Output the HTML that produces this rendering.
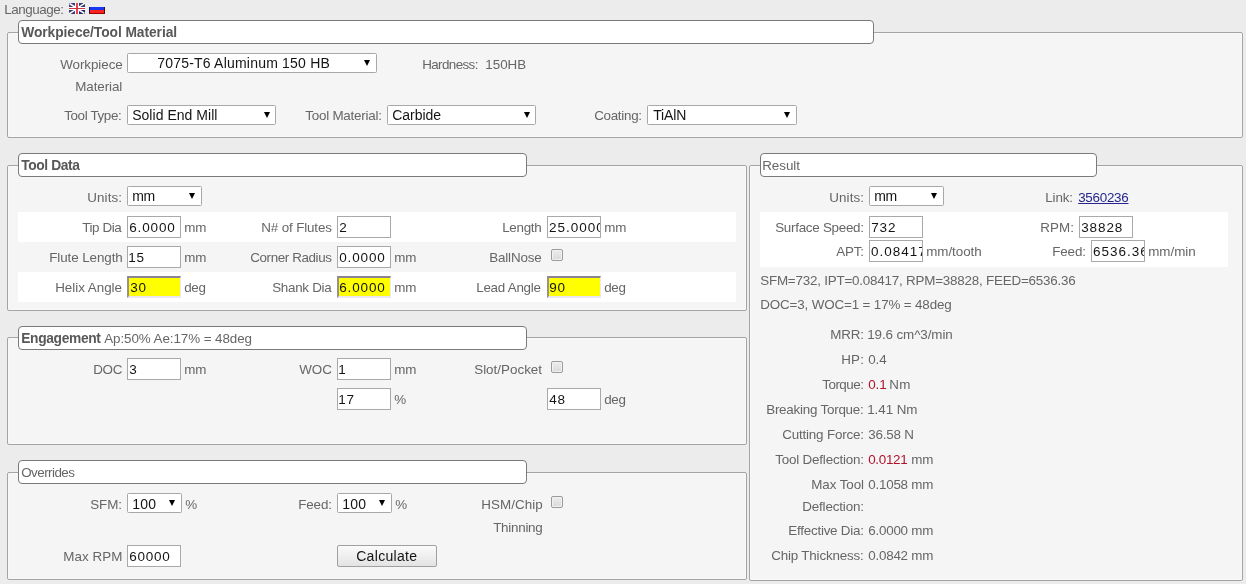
<!DOCTYPE html>
<html><head><meta charset="utf-8"><style>
html,body{margin:0;padding:0;}
body{width:1246px;height:584px;overflow:hidden;background:#ececec;position:relative;font-family:"Liberation Sans",sans-serif;}
#w{position:absolute;left:0;top:0;width:1246px;height:584px;will-change:transform;}
.x{position:absolute;line-height:16px;white-space:pre;}
.n{position:absolute;font-size:13.5px;line-height:16px;white-space:pre;color:#141414;}
</style></head><body><div id="w">
<svg style="position:absolute;left:69px;top:3px" width="16" height="11" viewBox="0 0 16 11">
<rect width="16" height="11" fill="#fff"/>
<rect x="0" y="0" width="6" height="4" fill="#3c3c78"/><rect x="10" y="0" width="6" height="4" fill="#2c3c6c"/>
<rect x="0" y="7" width="6" height="4" fill="#3c3c78"/><rect x="10" y="7" width="6" height="4" fill="#28286a"/>
<path d="M0.5,0.5 L6,4 M16,0 L10,4 M0,11 L6,7 M10,7 L15.5,10.5" stroke="#fff" stroke-width="1.5"/>
<rect x="7" y="0" width="2" height="11" fill="#e84050"/><rect x="0" y="5" width="16" height="1" fill="#d03040"/>
</svg>
<svg style="position:absolute;left:89px;top:6px" width="16" height="8" viewBox="0 0 16 8">
<rect width="16" height="8" fill="#c00"/>
<rect x="0" y="0" width="16" height="1" fill="#e8e8ff"/>
<rect x="0" y="1" width="16" height="3" fill="#1838f0"/>
<rect x="0" y="4" width="16" height="3" fill="#ff2020"/>
<rect x="0" y="1" width="1" height="7" fill="#101070"/><rect x="15" y="1" width="1" height="7" fill="#500"/>
<rect x="0" y="7" width="16" height="1" fill="#900"/>
</svg>
<div style="position:absolute;left:7px;top:32px;width:1236px;height:106px;box-sizing:border-box;border:1px solid #a4a4a4;border-radius:2px;background:#f5f5f5;box-shadow:inset 0 0 0 1px #f9f9f9"></div>
<div style="position:absolute;left:18px;top:20px;width:856px;height:24px;box-sizing:border-box;border:1px solid #7a7a7a;border-radius:4px;background:#fff"></div>
<div style="position:absolute;left:127px;top:53px;width:250px;height:20px;box-sizing:border-box;border:1px solid #a8a8a8;border-radius:1.5px;background:#fff"></div>
<svg style="position:absolute;left:364px;top:60px" width="6" height="6"><polygon points="0,0 6,0 3,6" fill="#000"/></svg>
<div style="position:absolute;left:127px;top:105px;width:149px;height:20px;box-sizing:border-box;border:1px solid #a8a8a8;border-radius:1.5px;background:#fff"></div>
<svg style="position:absolute;left:264px;top:112px" width="6" height="6"><polygon points="0,0 6,0 3,6" fill="#000"/></svg>
<div style="position:absolute;left:387px;top:105px;width:149px;height:20px;box-sizing:border-box;border:1px solid #a8a8a8;border-radius:1.5px;background:#fff"></div>
<svg style="position:absolute;left:524px;top:112px" width="6" height="6"><polygon points="0,0 6,0 3,6" fill="#000"/></svg>
<div style="position:absolute;left:647px;top:105px;width:150px;height:20px;box-sizing:border-box;border:1px solid #a8a8a8;border-radius:1.5px;background:#fff"></div>
<svg style="position:absolute;left:784px;top:112px" width="6" height="6"><polygon points="0,0 6,0 3,6" fill="#000"/></svg>
<div style="position:absolute;left:7px;top:165px;width:740px;height:146px;box-sizing:border-box;border:1px solid #a4a4a4;border-radius:2px;background:#f5f5f5;box-shadow:inset 0 0 0 1px #f9f9f9"></div>
<div style="position:absolute;left:18px;top:153px;width:509px;height:24px;box-sizing:border-box;border:1px solid #7a7a7a;border-radius:4px;background:#fff"></div>
<div style="position:absolute;left:127px;top:186px;width:75px;height:20px;box-sizing:border-box;border:1px solid #a8a8a8;border-radius:1.5px;background:#fff"></div>
<svg style="position:absolute;left:189px;top:193px" width="6" height="6"><polygon points="0,0 6,0 3,6" fill="#000"/></svg>
<div style="position:absolute;left:18px;top:212px;width:718px;height:30px;box-sizing:border-box;background:#fff"></div>
<div style="position:absolute;left:18px;top:272px;width:718px;height:30px;box-sizing:border-box;background:#fff"></div>
<div style="position:absolute;left:127px;top:216px;width:54px;height:22px;box-sizing:border-box;background:#fff;border:1px solid #a9a9a9"></div>
<div style="position:absolute;left:337px;top:216px;width:54px;height:22px;box-sizing:border-box;background:#fff;border:1px solid #a9a9a9"></div>
<div style="position:absolute;left:547px;top:216px;width:54px;height:22px;box-sizing:border-box;background:#fff;border:1px solid #a9a9a9"></div>
<div style="position:absolute;left:127px;top:246px;width:54px;height:22px;box-sizing:border-box;background:#fff;border:1px solid #a9a9a9"></div>
<div style="position:absolute;left:337px;top:246px;width:54px;height:22px;box-sizing:border-box;background:#fff;border:1px solid #a9a9a9"></div>
<div style="position:absolute;left:551px;top:249px;width:12px;height:12px;box-sizing:border-box;border:1px solid #9a9a9a;border-radius:2px;background:linear-gradient(#ececec,#dadada);box-shadow:inset 0 0 0 1px #f2f2f2"></div>
<div style="position:absolute;left:127px;top:276px;width:54px;height:22px;box-sizing:border-box;background:#ffff00;border-top:2px solid #8a8490;border-left:2px solid #989098;border-right:1px solid #eeeaf2;border-bottom:2px solid #ebe6f0"></div>
<div style="position:absolute;left:337px;top:276px;width:54px;height:22px;box-sizing:border-box;background:#ffff00;border-top:2px solid #8a8490;border-left:2px solid #989098;border-right:1px solid #eeeaf2;border-bottom:2px solid #ebe6f0"></div>
<div style="position:absolute;left:547px;top:276px;width:54px;height:22px;box-sizing:border-box;background:#ffff00;border-top:2px solid #8a8490;border-left:2px solid #989098;border-right:1px solid #eeeaf2;border-bottom:2px solid #ebe6f0"></div>
<div style="position:absolute;left:549px;top:217px;width:51px;height:20px;overflow:hidden"><div class="n" style="left:0px;top:2.9px;letter-spacing:1px">25.0000</div></div>
<div style="position:absolute;left:7px;top:337px;width:740px;height:108px;box-sizing:border-box;border:1px solid #a4a4a4;border-radius:2px;background:#f5f5f5;box-shadow:inset 0 0 0 1px #f9f9f9"></div>
<div style="position:absolute;left:18px;top:326px;width:509px;height:24px;box-sizing:border-box;border:1px solid #7a7a7a;border-radius:4px;background:#fff"></div>
<div style="position:absolute;left:127px;top:358px;width:54px;height:22px;box-sizing:border-box;background:#fff;border:1px solid #a9a9a9"></div>
<div style="position:absolute;left:337px;top:358px;width:54px;height:22px;box-sizing:border-box;background:#fff;border:1px solid #a9a9a9"></div>
<div style="position:absolute;left:551px;top:361px;width:12px;height:12px;box-sizing:border-box;border:1px solid #9a9a9a;border-radius:2px;background:linear-gradient(#ececec,#dadada);box-shadow:inset 0 0 0 1px #f2f2f2"></div>
<div style="position:absolute;left:337px;top:388px;width:54px;height:22px;box-sizing:border-box;background:#fff;border:1px solid #a9a9a9"></div>
<div style="position:absolute;left:547px;top:388px;width:54px;height:22px;box-sizing:border-box;background:#fff;border:1px solid #a9a9a9"></div>
<div style="position:absolute;left:7px;top:472px;width:740px;height:108px;box-sizing:border-box;border:1px solid #a4a4a4;border-radius:2px;background:#f5f5f5;box-shadow:inset 0 0 0 1px #f9f9f9"></div>
<div style="position:absolute;left:18px;top:460px;width:509px;height:24px;box-sizing:border-box;border:1px solid #7a7a7a;border-radius:4px;background:#fff"></div>
<div style="position:absolute;left:127px;top:493px;width:55px;height:20px;box-sizing:border-box;border:1px solid #a8a8a8;border-radius:1.5px;background:#fff"></div>
<svg style="position:absolute;left:169px;top:500px" width="6" height="6"><polygon points="0,0 6,0 3,6" fill="#000"/></svg>
<div style="position:absolute;left:337px;top:493px;width:55px;height:20px;box-sizing:border-box;border:1px solid #a8a8a8;border-radius:1.5px;background:#fff"></div>
<svg style="position:absolute;left:379px;top:500px" width="6" height="6"><polygon points="0,0 6,0 3,6" fill="#000"/></svg>
<div style="position:absolute;left:551px;top:496px;width:12px;height:12px;box-sizing:border-box;border:1px solid #9a9a9a;border-radius:2px;background:linear-gradient(#ececec,#dadada);box-shadow:inset 0 0 0 1px #f2f2f2"></div>
<div style="position:absolute;left:127px;top:545px;width:54px;height:22px;box-sizing:border-box;background:#fff;border:1px solid #a9a9a9"></div>
<div style="position:absolute;left:337px;top:545px;width:100px;height:22px;box-sizing:border-box;border:1px solid #a0a0a0;border-radius:2px;background:linear-gradient(#fbfbfb,#e3e3e3)"></div>
<div style="position:absolute;left:749px;top:165px;width:494px;height:416px;box-sizing:border-box;border:1px solid #a4a4a4;border-radius:2px;background:#f5f5f5;box-shadow:inset 0 0 0 1px #f9f9f9"></div>
<div style="position:absolute;left:760px;top:153px;width:337px;height:24px;box-sizing:border-box;border:1px solid #7a7a7a;border-radius:4px;background:#fff"></div>
<div style="position:absolute;left:869px;top:186px;width:75px;height:20px;box-sizing:border-box;border:1px solid #a8a8a8;border-radius:1.5px;background:#fff"></div>
<svg style="position:absolute;left:931px;top:193px" width="6" height="6"><polygon points="0,0 6,0 3,6" fill="#000"/></svg>
<div style="position:absolute;left:760px;top:212px;width:468px;height:55px;box-sizing:border-box;background:#fff"></div>
<div style="position:absolute;left:869px;top:216px;width:54px;height:22px;box-sizing:border-box;background:#fff;border:1px solid #a9a9a9"></div>
<div style="position:absolute;left:1079px;top:216px;width:54px;height:22px;box-sizing:border-box;background:#fff;border:1px solid #a9a9a9"></div>
<div style="position:absolute;left:869px;top:240px;width:54px;height:22px;box-sizing:border-box;background:#fff;border:1px solid #a9a9a9"></div>
<div style="position:absolute;left:1091px;top:240px;width:54px;height:22px;box-sizing:border-box;background:#fff;border:1px solid #a9a9a9"></div>
<div style="position:absolute;left:871px;top:241px;width:51px;height:20px;overflow:hidden"><div class="n" style="left:0px;top:2.9px;letter-spacing:1px">0.08417</div></div>
<div style="position:absolute;left:1093px;top:241px;width:51px;height:20px;overflow:hidden"><div class="n" style="left:0px;top:2.9px;letter-spacing:1px">6536.36</div></div>
<div class="x" style="left:4.20px;top:1.96px;font-size:13.4px;font-weight:400;color:#666666;letter-spacing:-0.435px;">Language:</div>
<div class="x" style="left:21.20px;top:25.02px;font-size:13.8px;font-weight:700;color:#585858;letter-spacing:-0.068px;">Workpiece/Tool Material</div>
<div class="x" style="left:60.20px;top:56.96px;font-size:13.4px;font-weight:400;color:#666666;letter-spacing:-0.058px;">Workpiece</div>
<div class="x" style="left:75.20px;top:78.96px;font-size:13.4px;font-weight:400;color:#666666;letter-spacing:-0.079px;">Material</div>
<div class="x" style="left:157.20px;top:55.15px;font-size:14px;font-weight:400;color:#141414;letter-spacing:0.208px;">7075-T6 Aluminum 150 HB</div>
<div class="x" style="left:422.20px;top:56.96px;font-size:13.4px;font-weight:400;color:#666666;letter-spacing:-0.600px;">Hardness:</div>
<div class="x" style="left:485.20px;top:56.96px;font-size:13.4px;font-weight:400;color:#666666;letter-spacing:0.022px;">150HB</div>
<div class="x" style="left:64.20px;top:107.96px;font-size:13.4px;font-weight:400;color:#666666;letter-spacing:-0.357px;">Tool Type:</div>
<div class="x" style="left:132.20px;top:107.15px;font-size:14px;font-weight:400;color:#141414;letter-spacing:0.031px;">Solid End Mill</div>
<div class="x" style="left:305.20px;top:107.96px;font-size:13.4px;font-weight:400;color:#666666;letter-spacing:-0.216px;">Tool Material:</div>
<div class="x" style="left:392.20px;top:107.15px;font-size:14px;font-weight:400;color:#141414;letter-spacing:-0.024px;">Carbide</div>
<div class="x" style="left:594.20px;top:107.96px;font-size:13.4px;font-weight:400;color:#666666;letter-spacing:-0.294px;">Coating:</div>
<div class="x" style="left:653.20px;top:107.15px;font-size:14px;font-weight:400;color:#141414;letter-spacing:-0.123px;">TiAlN</div>
<div class="x" style="left:21.20px;top:158.02px;font-size:13.8px;font-weight:700;color:#585858;letter-spacing:-0.382px;">Tool Data</div>
<div class="x" style="left:87.20px;top:189.96px;font-size:13.4px;font-weight:400;color:#666666;letter-spacing:0.118px;">Units:</div>
<div class="x" style="left:132.20px;top:188.15px;font-size:14px;font-weight:400;color:#141414;letter-spacing:-0.300px;">mm</div>
<div class="x" style="left:82.20px;top:219.96px;font-size:13.4px;font-weight:400;color:#666666;letter-spacing:-0.395px;">Tip Dia</div>
<div class="x" style="left:129.20px;top:220.22px;font-size:13.5px;font-weight:400;color:#141414;letter-spacing:0.863px;">6.0000</div>
<div class="x" style="left:184.20px;top:219.96px;font-size:13.4px;font-weight:400;color:#666666;letter-spacing:-0.054px;">mm</div>
<div class="x" style="left:261.20px;top:219.96px;font-size:13.4px;font-weight:400;color:#666666;letter-spacing:-0.127px;">N# of Flutes</div>
<div class="x" style="left:339.20px;top:220.22px;font-size:13.5px;font-weight:400;color:#141414;letter-spacing:0.900px;">2</div>
<div class="x" style="left:502.20px;top:219.96px;font-size:13.4px;font-weight:400;color:#666666;letter-spacing:-0.282px;">Length</div>
<div class="x" style="left:604.20px;top:219.96px;font-size:13.4px;font-weight:400;color:#666666;letter-spacing:-0.054px;">mm</div>
<div class="x" style="left:49.20px;top:249.96px;font-size:13.4px;font-weight:400;color:#666666;letter-spacing:-0.082px;">Flute Length</div>
<div class="x" style="left:128.20px;top:250.22px;font-size:13.5px;font-weight:400;color:#141414;letter-spacing:0.900px;">15</div>
<div class="x" style="left:184.20px;top:249.96px;font-size:13.4px;font-weight:400;color:#666666;letter-spacing:-0.054px;">mm</div>
<div class="x" style="left:250.20px;top:249.96px;font-size:13.4px;font-weight:400;color:#666666;letter-spacing:-0.378px;">Corner Radius</div>
<div class="x" style="left:339.20px;top:250.22px;font-size:13.5px;font-weight:400;color:#141414;letter-spacing:0.863px;">0.0000</div>
<div class="x" style="left:394.20px;top:249.96px;font-size:13.4px;font-weight:400;color:#666666;letter-spacing:-0.054px;">mm</div>
<div class="x" style="left:489.20px;top:249.96px;font-size:13.4px;font-weight:400;color:#666666;letter-spacing:-0.149px;">BallNose</div>
<div class="x" style="left:55.20px;top:279.96px;font-size:13.4px;font-weight:400;color:#666666;letter-spacing:-0.018px;">Helix Angle</div>
<div class="x" style="left:130.20px;top:280.22px;font-size:13.5px;font-weight:400;color:#141414;letter-spacing:0.900px;">30</div>
<div class="x" style="left:184.20px;top:279.96px;font-size:13.4px;font-weight:400;color:#666666;letter-spacing:-0.300px;">deg</div>
<div class="x" style="left:272.20px;top:279.96px;font-size:13.4px;font-weight:400;color:#666666;letter-spacing:-0.279px;">Shank Dia</div>
<div class="x" style="left:339.20px;top:280.22px;font-size:13.5px;font-weight:400;color:#141414;letter-spacing:0.863px;">6.0000</div>
<div class="x" style="left:394.20px;top:279.96px;font-size:13.4px;font-weight:400;color:#666666;letter-spacing:-0.054px;">mm</div>
<div class="x" style="left:476.20px;top:279.96px;font-size:13.4px;font-weight:400;color:#666666;letter-spacing:-0.246px;">Lead Angle</div>
<div class="x" style="left:549.20px;top:280.22px;font-size:13.5px;font-weight:400;color:#141414;letter-spacing:0.900px;">90</div>
<div class="x" style="left:604.20px;top:279.96px;font-size:13.4px;font-weight:400;color:#666666;letter-spacing:-0.300px;">deg</div>
<div class="x" style="left:21.20px;top:331.02px;font-size:13.8px;font-weight:700;color:#585858;letter-spacing:-0.344px;">Engagement</div>
<div class="x" style="left:104.20px;top:330.96px;font-size:13.4px;font-weight:400;color:#666666;letter-spacing:-0.073px;">Ap:50% Ae:17% = 48deg</div>
<div class="x" style="left:93.20px;top:361.96px;font-size:13.4px;font-weight:400;color:#666666;letter-spacing:-0.300px;">DOC</div>
<div class="x" style="left:129.20px;top:362.22px;font-size:13.5px;font-weight:400;color:#141414;letter-spacing:0.900px;">3</div>
<div class="x" style="left:184.20px;top:361.96px;font-size:13.4px;font-weight:400;color:#666666;letter-spacing:-0.054px;">mm</div>
<div class="x" style="left:299.20px;top:361.96px;font-size:13.4px;font-weight:400;color:#666666;letter-spacing:0.023px;">WOC</div>
<div class="x" style="left:338.20px;top:362.22px;font-size:13.5px;font-weight:400;color:#141414;letter-spacing:0.900px;">1</div>
<div class="x" style="left:394.20px;top:361.96px;font-size:13.4px;font-weight:400;color:#666666;letter-spacing:-0.054px;">mm</div>
<div class="x" style="left:474.20px;top:361.96px;font-size:13.4px;font-weight:400;color:#666666;letter-spacing:0.009px;">Slot/Pocket</div>
<div class="x" style="left:338.20px;top:392.22px;font-size:13.5px;font-weight:400;color:#141414;letter-spacing:0.900px;">17</div>
<div class="x" style="left:394.20px;top:391.96px;font-size:13.4px;font-weight:400;color:#666666;letter-spacing:0.000px;">%</div>
<div class="x" style="left:549.20px;top:392.22px;font-size:13.5px;font-weight:400;color:#141414;letter-spacing:0.900px;">48</div>
<div class="x" style="left:604.20px;top:391.96px;font-size:13.4px;font-weight:400;color:#666666;letter-spacing:-0.300px;">deg</div>
<div class="x" style="left:21.20px;top:464.96px;font-size:13.4px;font-weight:400;color:#666;letter-spacing:-0.531px;">Overrides</div>
<div class="x" style="left:90.20px;top:496.96px;font-size:13.4px;font-weight:400;color:#666666;letter-spacing:-0.055px;">SFM:</div>
<div class="x" style="left:132.20px;top:496.15px;font-size:14px;font-weight:400;color:#141414;letter-spacing:0.264px;">100</div>
<div class="x" style="left:185.20px;top:496.96px;font-size:13.4px;font-weight:400;color:#666666;letter-spacing:0.000px;">%</div>
<div class="x" style="left:298.20px;top:496.96px;font-size:13.4px;font-weight:400;color:#666666;letter-spacing:-0.105px;">Feed:</div>
<div class="x" style="left:342.20px;top:496.15px;font-size:14px;font-weight:400;color:#141414;letter-spacing:0.264px;">100</div>
<div class="x" style="left:395.20px;top:496.96px;font-size:13.4px;font-weight:400;color:#666666;letter-spacing:0.000px;">%</div>
<div class="x" style="left:481.20px;top:496.96px;font-size:13.4px;font-weight:400;color:#666666;letter-spacing:0.076px;">HSM/Chip</div>
<div class="x" style="left:493.20px;top:519.96px;font-size:13.4px;font-weight:400;color:#666666;letter-spacing:-0.260px;">Thinning</div>
<div class="x" style="left:63.20px;top:548.96px;font-size:13.4px;font-weight:400;color:#666666;letter-spacing:0.080px;">Max RPM</div>
<div class="x" style="left:129.20px;top:549.22px;font-size:13.5px;font-weight:400;color:#141414;letter-spacing:0.767px;">60000</div>
<div class="x" style="left:356.20px;top:548.15px;font-size:14px;font-weight:400;color:#141414;letter-spacing:0.315px;">Calculate</div>
<div class="x" style="left:762.20px;top:157.96px;font-size:13.4px;font-weight:400;color:#666;letter-spacing:-0.027px;">Result</div>
<div class="x" style="left:829.20px;top:189.96px;font-size:13.4px;font-weight:400;color:#666666;letter-spacing:0.118px;">Units:</div>
<div class="x" style="left:874.20px;top:188.15px;font-size:14px;font-weight:400;color:#141414;letter-spacing:-0.300px;">mm</div>
<div class="x" style="left:1045.20px;top:189.96px;font-size:13.4px;font-weight:400;color:#666666;letter-spacing:-0.116px;">Link:</div>
<div class="x" style="left:1078.20px;top:189.96px;font-size:13.4px;font-weight:400;color:#26268e;letter-spacing:-0.264px;text-decoration:underline">3560236</div>
<div class="x" style="left:775.20px;top:219.96px;font-size:13.4px;font-weight:400;color:#666666;letter-spacing:-0.268px;">Surface Speed:</div>
<div class="x" style="left:871.20px;top:220.22px;font-size:13.5px;font-weight:400;color:#141414;letter-spacing:0.900px;">732</div>
<div class="x" style="left:1040.20px;top:219.96px;font-size:13.4px;font-weight:400;color:#666666;letter-spacing:0.115px;">RPM:</div>
<div class="x" style="left:1081.20px;top:220.22px;font-size:13.5px;font-weight:400;color:#141414;letter-spacing:0.900px;">38828</div>
<div class="x" style="left:836.20px;top:243.96px;font-size:13.4px;font-weight:400;color:#666666;letter-spacing:-0.152px;">APT:</div>
<div class="x" style="left:926.20px;top:243.96px;font-size:13.4px;font-weight:400;color:#666666;letter-spacing:-0.038px;">mm/tooth</div>
<div class="x" style="left:1052.20px;top:243.96px;font-size:13.4px;font-weight:400;color:#666666;letter-spacing:-0.105px;">Feed:</div>
<div class="x" style="left:1148.20px;top:243.96px;font-size:13.4px;font-weight:400;color:#666666;letter-spacing:-0.012px;">mm/min</div>
<div class="x" style="left:760.20px;top:272.96px;font-size:13.4px;font-weight:400;color:#666666;letter-spacing:-0.205px;">SFM=732, IPT=0.08417, RPM=38828, FEED=6536.36</div>
<div class="x" style="left:760.20px;top:296.96px;font-size:13.4px;font-weight:400;color:#666666;letter-spacing:-0.139px;">DOC=3, WOC=1 = 17% = 48deg</div>
<div class="x" style="left:830.20px;top:326.96px;font-size:13.4px;font-weight:400;color:#666666;letter-spacing:-0.132px;">MRR:</div>
<div class="x" style="left:867.20px;top:326.96px;font-size:13.4px;font-weight:400;color:#666666;letter-spacing:-0.093px;">19.6 cm^3/min</div>
<div class="x" style="left:841.20px;top:351.96px;font-size:13.4px;font-weight:400;color:#666666;letter-spacing:0.249px;">HP:</div>
<div class="x" style="left:868.20px;top:351.96px;font-size:13.4px;font-weight:400;color:#666666;letter-spacing:-0.034px;">0.4</div>
<div class="x" style="left:766.20px;top:401.96px;font-size:13.4px;font-weight:400;color:#666666;letter-spacing:-0.228px;">Breaking Torque:</div>
<div class="x" style="left:867.20px;top:401.96px;font-size:13.4px;font-weight:400;color:#666666;letter-spacing:-0.059px;">1.41 Nm</div>
<div class="x" style="left:782.20px;top:426.96px;font-size:13.4px;font-weight:400;color:#666666;letter-spacing:-0.175px;">Cutting Force:</div>
<div class="x" style="left:868.20px;top:426.96px;font-size:13.4px;font-weight:400;color:#666666;letter-spacing:-0.188px;">36.58 N</div>
<div class="x" style="left:811.20px;top:476.96px;font-size:13.4px;font-weight:400;color:#666666;letter-spacing:-0.072px;">Max Tool</div>
<div class="x" style="left:868.20px;top:476.96px;font-size:13.4px;font-weight:400;color:#666666;letter-spacing:-0.216px;">0.1058 mm</div>
<div class="x" style="left:802.20px;top:498.96px;font-size:13.4px;font-weight:400;color:#666666;letter-spacing:-0.145px;">Deflection:</div>
<div class="x" style="left:788.20px;top:522.96px;font-size:13.4px;font-weight:400;color:#666666;letter-spacing:-0.217px;">Effective Dia:</div>
<div class="x" style="left:868.20px;top:522.96px;font-size:13.4px;font-weight:400;color:#666666;letter-spacing:-0.216px;">6.0000 mm</div>
<div class="x" style="left:771.20px;top:547.96px;font-size:13.4px;font-weight:400;color:#666666;letter-spacing:-0.174px;">Chip Thickness:</div>
<div class="x" style="left:868.20px;top:547.96px;font-size:13.4px;font-weight:400;color:#666666;letter-spacing:-0.216px;">0.0842 mm</div>
<div class="x" style="left:822.20px;top:376.96px;font-size:13.4px;font-weight:400;color:#666666;letter-spacing:-0.474px;">Torque:</div>
<div class="x" style="left:868.20px;top:376.96px;font-size:13.4px;font-weight:400;color:#b2122a;letter-spacing:-0.034px;">0.1</div>
<div class="x" style="left:889.20px;top:376.96px;font-size:13.4px;font-weight:400;color:#666666;letter-spacing:0.300px;">Nm</div>
<div class="x" style="left:775.20px;top:451.96px;font-size:13.4px;font-weight:400;color:#666666;letter-spacing:-0.182px;">Tool Deflection:</div>
<div class="x" style="left:868.20px;top:451.96px;font-size:13.4px;font-weight:400;color:#b2122a;letter-spacing:-0.282px;">0.0121</div>
<div class="x" style="left:911.20px;top:451.96px;font-size:13.4px;font-weight:400;color:#666666;letter-spacing:-0.054px;">mm</div>
</div></body></html>
